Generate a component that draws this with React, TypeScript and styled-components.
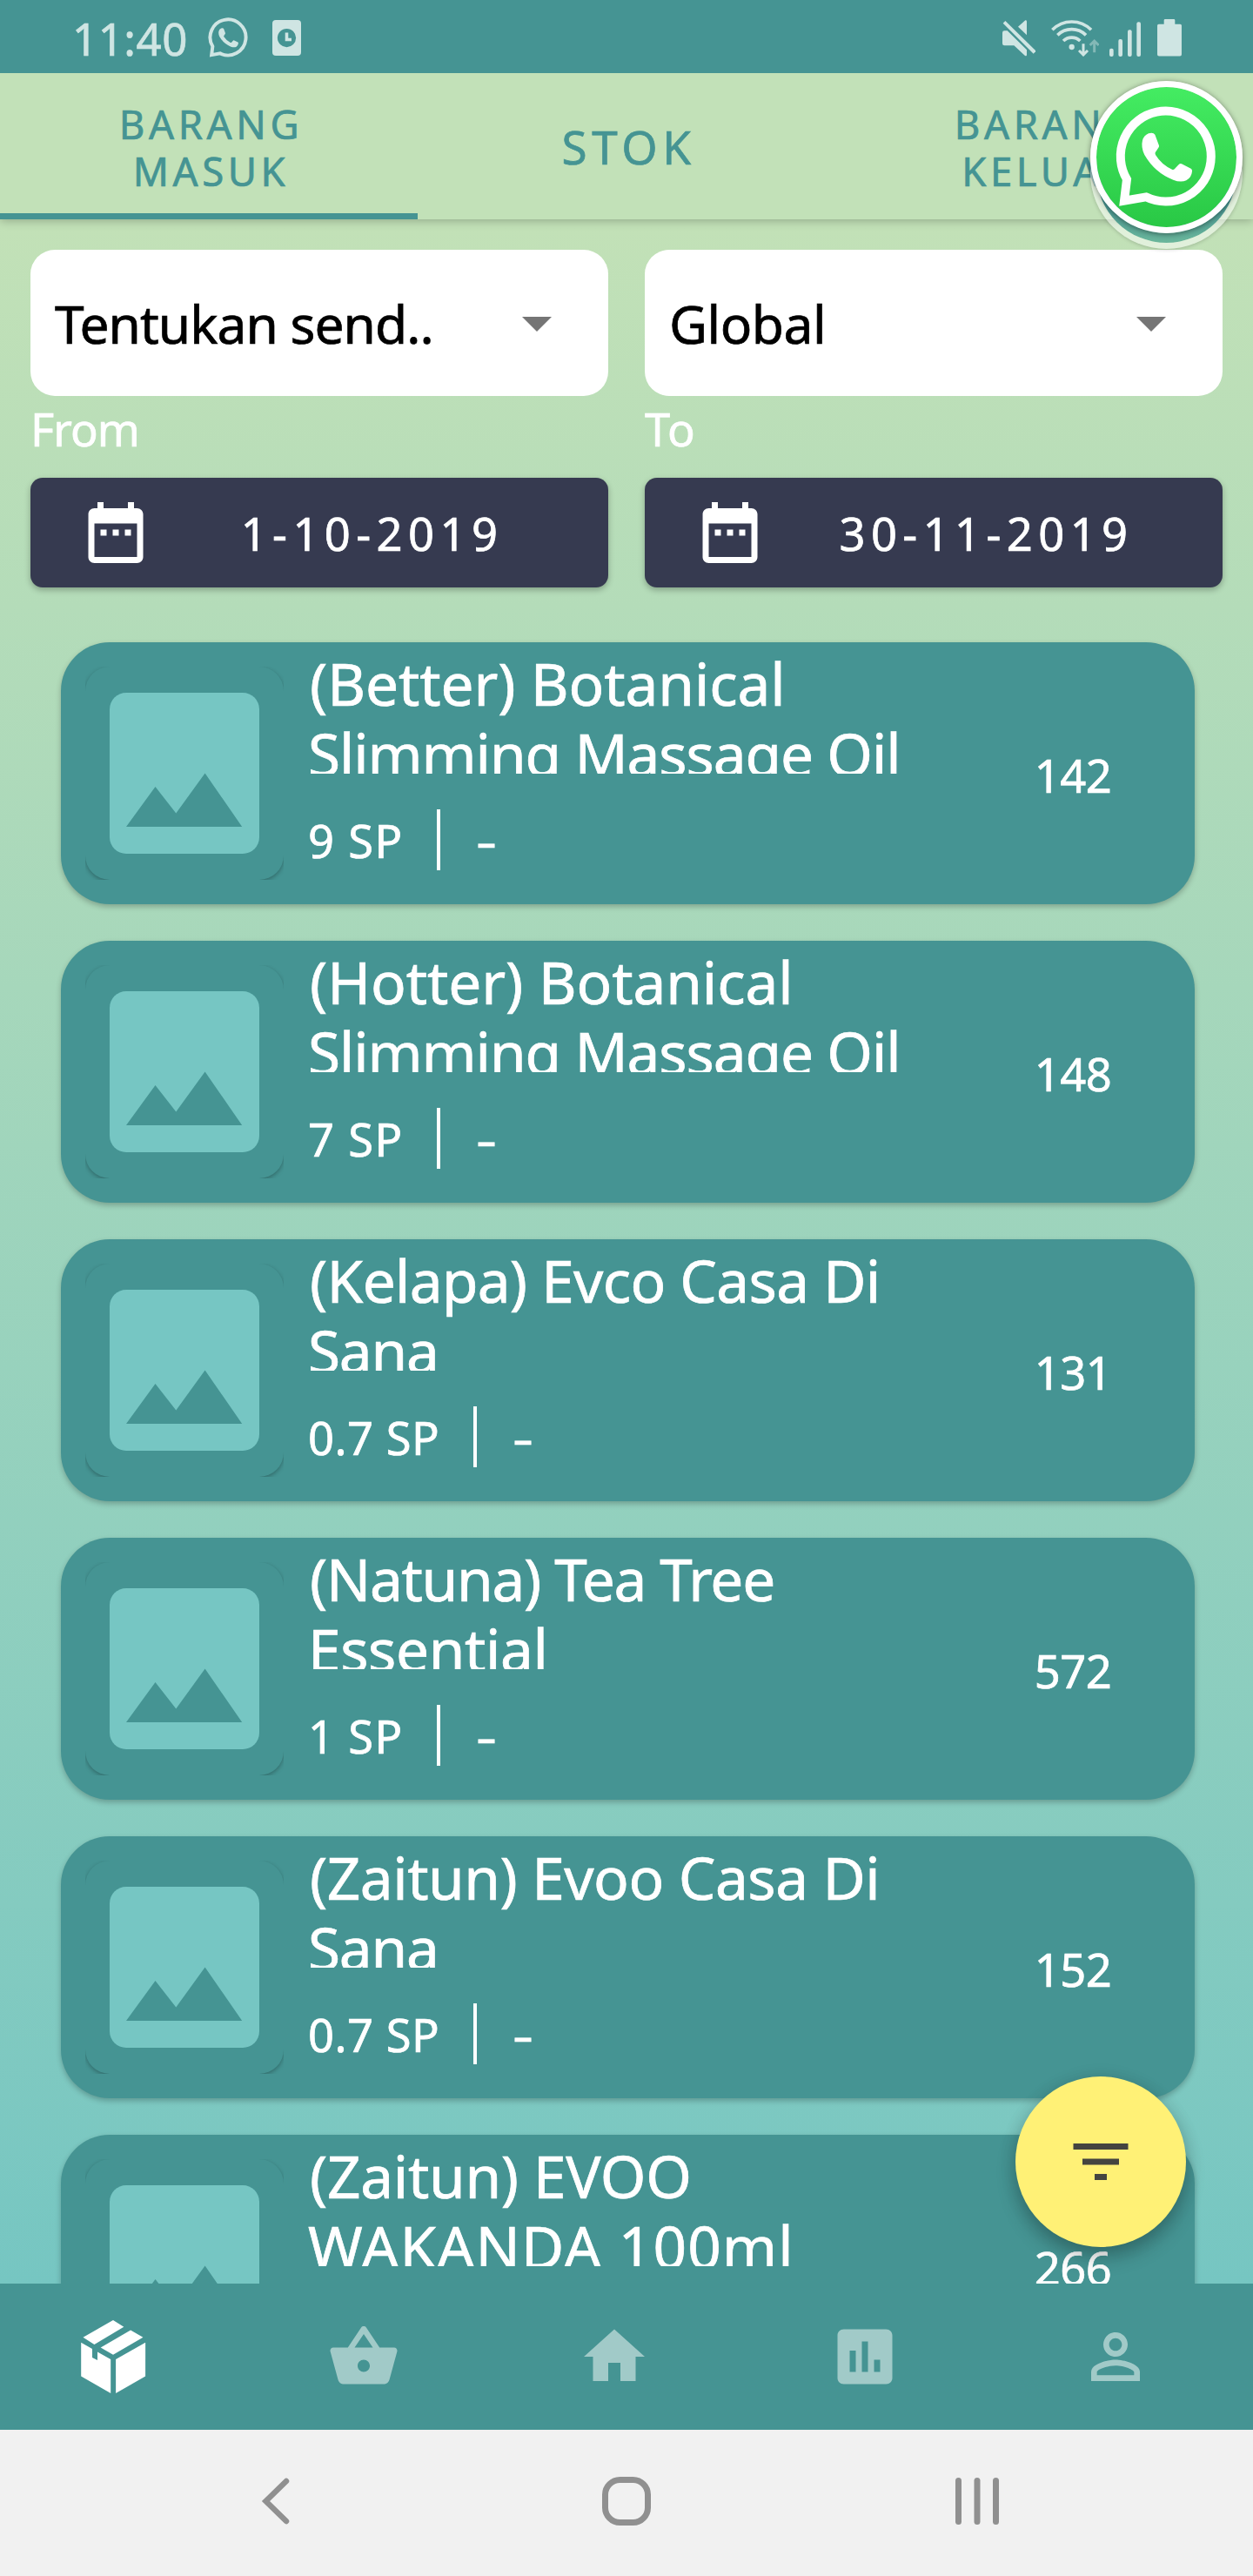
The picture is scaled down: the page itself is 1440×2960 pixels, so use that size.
import React from 'react';
import styled, { createGlobalStyle } from 'styled-components';

const TEAL = '#459493';
const STATUS_TINT = '#cfe5e3';

const GlobalStyle = createGlobalStyle`
  * { box-sizing: border-box; }
  body { margin: 0; }
`;

const Screen = styled.div`
  width: 1440px;
  height: 2960px;
  display: flex;
  flex-direction: column;
  overflow: hidden;
  font-family: 'Noto Sans', 'Open Sans', sans-serif;
  font-weight: 400;
  -webkit-text-stroke: 0.7px currentColor;
  color: #fff;
`;

/* ---------- status bar ---------- */

const StatusBar = styled.header`
  height: 84px;
  flex: none;
  display: flex;
  align-items: center;
  justify-content: space-between;
  padding: 3px 82px 0 83px;
  background: ${TEAL};
  color: ${STATUS_TINT};
`;

const StatusGroup = styled.div`
  display: flex;
  align-items: center;
`;

const Clock = styled.span`
  font-size: 51px;
  line-height: 70px;
  letter-spacing: 0.5px;
  width: 130px;
  margin-right: 27px;
`;

const StatusIcon = styled.svg<{ $ml?: number }>`
  display: block;
  flex: none;
  margin-left: ${p => p.$ml ?? 0}px;
`;

/* ---------- content ---------- */

const Content = styled.main`
  position: relative;
  flex: 1;
  min-height: 0;
  display: flex;
  flex-direction: column;
  overflow: hidden;
  background: linear-gradient(180deg, #c2e1b7 0%, #c2e1b7 7%, #76c6c2 100%);
`;

const Tabs = styled.nav`
  height: 168px;
  flex: none;
  display: grid;
  grid-template-columns: repeat(3, 1fr);
  background: #c2e1b8;
  box-shadow: 0 2px 10px rgba(0, 0, 0, 0.24);
`;

const Tab = styled.div<{ $active?: boolean; $large?: boolean }>`
  display: flex;
  align-items: center;
  justify-content: center;
  text-align: center;
  padding: ${p => (p.$large ? 9 : 8)}px 0 0 5px;
  border-bottom: 7px solid ${p => (p.$active ? TEAL : 'transparent')};
  color: ${TEAL};
  font-size: ${p => (p.$large ? 53 : 45.5)}px;
  line-height: ${p => (p.$large ? 72 : 54)}px;
  letter-spacing: ${p => (p.$large ? 5.6 : 4.6)}px;
`;

const TabLabel = styled.span<{ $width: number }>`
  width: ${p => p.$width}px;
`;

const Filters = styled.section`
  flex: none;
  display: grid;
  grid-template-columns: 664px 664px;
  column-gap: 42px;
  padding: 35px 35px 0;
`;

const Select = styled.div`
  height: 168px;
  display: flex;
  align-items: center;
  justify-content: space-between;
  padding: 2px 65px 0 28px;
  border-radius: 28px;
  background: #fff;
  color: #000;
`;

const SelectText = styled.span<{ $track: number }>`
  font-size: 60.5px;
  line-height: 82px;
  letter-spacing: ${p => p.$track}px;
  white-space: nowrap;
`;

const Caret = styled.i`
  border: 17.5px solid transparent;
  border-top-color: #757575;
  border-bottom: 0;
`;

const FieldLabel = styled.div<{ $track: number }>`
  height: 94px;
  padding-top: 2px;
  font-size: 52.5px;
  line-height: 72px;
  letter-spacing: ${p => p.$track}px;
`;

const DateButton = styled.div`
  height: 126px;
  display: flex;
  align-items: center;
  padding: 0 19px 0 56px;
  border-radius: 14px;
  background: #363a50;
  box-shadow: 0 3px 7px rgba(0, 0, 0, 0.28);
`;

const DateText = styled.span`
  flex: 1;
  padding-top: 2px;
  text-align: center;
  font-size: 52.5px;
  line-height: 72px;
  letter-spacing: 6.4px;
`;

/* ---------- list ---------- */

const List = styled.section`
  flex: 1;
  min-height: 0;
  display: flex;
  flex-direction: column;
  gap: 42px;
  padding: 63px 67px 0 70px;
  overflow: hidden;
`;

const Card = styled.article`
  height: 301px;
  flex: none;
  display: flex;
  align-items: center;
  padding-left: 28px;
  border-radius: 56px;
  background: ${TEAL};
  box-shadow: 0 3px 6px rgba(0, 0, 0, 0.24);
`;

const ThumbClip = styled.div`
  width: 228px;
  height: 245px;
  flex: none;
  overflow: hidden;
`;

const Thumb = styled.div`
  height: 245px;
  display: flex;
  align-items: center;
  justify-content: center;
  border-radius: 28px;
  background: ${TEAL};
  box-shadow: 0 2px 5px rgba(0, 0, 0, 0.28);
`;

const Info = styled.div`
  align-self: stretch;
  flex: 1;
  min-width: 0;
  padding: 7px 0 0 28px;
`;

const Title = styled.h2`
  margin: 0;
  height: 144px;
  overflow: hidden;
  font-size: 67.5px;
  font-weight: 400;
  line-height: 81px;
  white-space: nowrap;
`;

const TitleLine = styled.span<{ $track: number; $indent: number }>`
  display: block;
  padding-left: ${p => p.$indent}px;
  letter-spacing: ${p => p.$track}px;
`;

const Meta = styled.div`
  margin-top: 40px;
  display: flex;
  align-items: center;
  font-size: 52.5px;
  line-height: 70px;
`;

const Points = styled.span<{ $track: number }>`
  padding-top: 1px;
  letter-spacing: ${p => p.$track}px;
`;

const Divider = styled.i`
  width: 4px;
  height: 70px;
  margin: 0 41px 0 39px;
  background: #fff;
`;

const Dash = styled.span`
  padding-top: 2px;
  transform: scaleX(1.42);
  transform-origin: left;
`;

const Count = styled.div`
  width: 281px;
  flex: none;
  padding: 4px 0 0 1px;
  text-align: center;
  font-size: 52.5px;
  line-height: 70px;
  letter-spacing: -0.6px;
`;

/* ---------- floating elements ---------- */

const Fab = styled.div`
  position: absolute;
  right: 77px;
  bottom: 42px;
  width: 196px;
  height: 196px;
  display: grid;
  place-items: center;
  border-radius: 50%;
  background: #fff176;
  color: #444440;
  box-shadow: 0 12px 22px rgba(0, 0, 0, 0.24), 0 2px 20px rgba(0, 0, 0, 0.1);
`;

const ChatHeads = styled.div`
  position: absolute;
  top: 9px;
  right: 12px;
  width: 175px;
  height: 193px;
`;

const BackHead = styled.div`
  position: absolute;
  inset: 18px 0 0;
  border-radius: 50%;
  border: 7px solid rgba(255, 255, 255, 0.5);
  background: linear-gradient(180deg, ${TEAL} 70%, #6ab69b 100%) padding-box;
  box-shadow: 0 1px 4px rgba(0, 0, 0, 0.18);
`;

const FrontHead = styled.div`
  position: absolute;
  inset: 0 0 18px;
  display: grid;
  place-items: center;
  border-radius: 50%;
  border: 7px solid #fff;
  background: linear-gradient(180deg, #44ec62, #29c845) padding-box;
  box-shadow: 0 1px 6px rgba(0, 0, 0, 0.45);
  color: #fff;
`;

/* ---------- bottom bars ---------- */

const BottomNav = styled.nav`
  height: 168px;
  flex: none;
  display: grid;
  grid-template-columns: repeat(5, 288px);
  place-items: center;
  padding-right: 28px;
  justify-content: center;
  background: ${TEAL};
`;

const NavItem = styled.div<{ $active?: boolean }>`
  width: 84px;
  height: 84px;
  color: ${p => (p.$active ? '#fff' : '#a1cac8')};
`;

const SystemNav = styled.footer`
  height: 168px;
  flex: none;
  display: flex;
  align-items: center;
  justify-content: space-between;
  padding: 0 292px 4px 300px;
  background: #f1f1f1;
  color: #909090;
`;

const HomeKey = styled.svg`
  display: block;
  margin-left: 7px;
`;

/* ---------- icons ---------- */

const Glyph = styled.svg`
  display: block;
  flex: none;
  overflow: visible;
`;

const MaterialIcon = ({ d }: { d: string }) => (
  <Glyph width="84" height="84" viewBox="0 0 24 24" fill="currentColor">
    <path d={d} />
  </Glyph>
);

const PATHS = {
  basket:
    'M17.21 9l-4.38-6.56c-.19-.28-.51-.42-.83-.42-.32 0-.64.14-.83.43L6.79 9H2c-.55 0-1 .45-1 1 0 .09.01.18.04.27l2.54 9.27c.23.84 1 1.46 1.92 1.46h13c.92 0 1.69-.62 1.93-1.46l2.54-9.27L23 10c0-.55-.45-1-1-1h-4.79zM9 9l3-4.4L15 9H9zm3 8c-1.1 0-2-.9-2-2s.9-2 2-2 2 .9 2 2-.9 2-2 2z',
  home: 'M10 20v-6h4v6h5v-8h3L12 3 2 12h3v8z',
  chart:
    'M19 3H5c-1.1 0-2 .9-2 2v14c0 1.1.9 2 2 2h14c1.1 0 2-.9 2-2V5c0-1.1-.9-2-2-2zM9 17H7v-7h2v7zm4 0h-2V7h2v10zm4 0h-2v-4h2v4z',
  person:
    'M12 5.9c1.16 0 2.1.94 2.1 2.1s-.94 2.1-2.1 2.1S9.9 9.16 9.9 8s.94-2.1 2.1-2.1m0 9c2.97 0 6.1 1.46 6.1 2.1v1.1H5.9V17c0-.64 3.13-2.1 6.1-2.1M12 4C9.79 4 8 5.79 8 8s1.79 4 4 4 4-1.79 4-4-1.79-4-4-4zm0 9c-2.67 0-8 1.34-8 4v3h16v-3c0-2.66-5.33-4-8-4z',
  calendar:
    'M9 11H7v2h2v-2zm4 0h-2v2h2v-2zm4 0h-2v2h2v-2zm2-7h-1V2h-2v2H8V2H6v2H5c-1.11 0-1.99.9-1.99 2L3 20c0 1.1.89 2 2 2h14c1.1 0 2-.9 2-2V6c0-1.1-.9-2-2-2zm0 16H5V9h14v11z',
  filter: 'M10 18h4v-2h-4v2zM3 6v2h18V6H3zm3 7h12v-2H6v2z',
};

const WhatsAppGlyph = ({ size }: { size: number }) => (
  <Glyph width={size} height={size} viewBox="132 126 342 342">
    <path
      d="M231 433A156 156 0 1 0 165 372L156 446Z"
      fill="none"
      stroke="currentColor"
      strokeWidth="30"
      strokeMiterlimit="8"
    />
    <path
      d="M240 214Q256 209 262 218L276 256Q277 261 273 265L263 280Q262 284 264 288Q285 322 321 338Q326 340 330 336L345 320Q349 316 354 319L386 335Q391 338 390 345Q388 366 370 376Q350 384 325 374Q262 350 226 288Q213 262 219 238Q223 222 240 214Z"
      fill="currentColor"
    />
  </Glyph>
);

const BoxIcon = () => (
  <Glyph width="84" height="84" viewBox="0 0 84 84" fill="currentColor">
    <path d="M7.5 19.8 42 0l12.3 7.8L20.4 28z" />
    <path d="M27.7 31.5 62.1 11.6l14.3 8.2L42 39.8z" />
    <path d="M5.2 25.7 18 33v9.9l6 3.1v-9.6l15.2 8.6v39L5.2 64.6z" />
    <path d="M45.1 45 79.1 25.7v38.9L45.1 84z" />
  </Glyph>
);

const PictureIcon = () => (
  <Glyph width="172" height="185" viewBox="0 0 172 185">
    <rect width="172" height="185" rx="19" fill="#76c6c3" />
    <path d="M19 154 52.5 108 76.3 138.5 109.6 92.5 152.2 154z" fill={TEAL} />
  </Glyph>
);

const StatusLeft = () => (
  <StatusGroup>
    <Clock>11:40</Clock>
    <WhatsAppGlyph size={45} />
    <StatusIcon $ml={28} width="33" height="41" viewBox="0 0 33 41">
      <rect width="33" height="41" rx="4" fill={STATUS_TINT} />
      <circle cx="16.5" cy="20.6" r="10.6" fill={TEAL} />
      <path d="M16.5 14.5v8h5.5" fill="none" stroke={STATUS_TINT} strokeWidth="3.6" />
    </StatusIcon>
  </StatusGroup>
);

const StatusRight = () => (
  <StatusGroup>
    <StatusIcon width="38.7" height="42" viewBox="35 35 116 126" fill={STATUS_TINT}>
      <path d="M37 46 45 38 151 142 142 151z" />
      <path d="M89 58 114 36Q119 34 119 40V87z" />
      <path d="M42 72H52L119 138V154Q119 162 112 157L75 123H42Q35 123 35 116V79Q35 72 42 72z" />
    </StatusIcon>
    <StatusIcon $ml={17.3} width="55.7" height="42" viewBox="203 35 167 126" fill="none" stroke={STATUS_TINT}>
      <g strokeWidth="11">
        <path d="M207 69A94 94 0 0 1 341 69" />
        <path d="M225 87A70 70 0 0 1 323 87" />
        <path d="M245 107A42 42 0 0 1 303 107" />
      </g>
      <circle cx="274" cy="128" r="9.5" fill={STATUS_TINT} stroke="none" />
      <path d="M314 117V154M299 140 314 155 329 140" strokeWidth="9" />
      <path d="M352 147V108M337 122 352 107 367 122" strokeWidth="9" opacity="0.45" />
    </StatusIcon>
    <StatusIcon $ml={11.7} width="36" height="42" viewBox="405 35 108 126" fill={STATUS_TINT}>
      <rect x="405" y="133" width="14" height="28" rx="6" />
      <rect x="436" y="101" width="14" height="60" rx="6" />
      <rect x="468" y="69" width="14" height="92" rx="6" />
      <rect x="499" y="42" width="14" height="119" rx="6" />
    </StatusIcon>
    <StatusIcon $ml={19} width="28" height="42.6" viewBox="570 34 84 128" fill={STATUS_TINT}>
      <path d="M593 38Q593 34 597 34H627Q631 34 631 38V51H649Q654 51 654 56V156Q654 162 648 162H576Q570 162 570 156V56Q570 51 575 51H593z" />
    </StatusIcon>
  </StatusGroup>
);

/* ---------- data ---------- */

type Line = [text: string, track: number, indent: number];
interface Item {
  lines: [Line, Line];
  points: string;
  pointsTrack: number;
  count: string;
}

const ITEMS: Item[] = [
  { lines: [['(Better) Botanical', -0.1, 2], ['Slimming Massage Oil', -1.1, 0]], points: '9 SP', pointsTrack: 1.3, count: '142' },
  { lines: [['(Hotter) Botanical', -0.1, 2], ['Slimming Massage Oil', -1.1, 0]], points: '7 SP', pointsTrack: 1.3, count: '148' },
  { lines: [['(Kelapa) Evco Casa Di', -0.7, 2], ['Sana', -1.2, 0]], points: '0.7 SP', pointsTrack: 0.5, count: '131' },
  { lines: [['(Natuna) Tea Tree', -1.3, 2], ['Essential', -0.4, 0]], points: '1 SP', pointsTrack: 1.3, count: '572' },
  { lines: [['(Zaitun) Evoo Casa Di', -0.5, 2], ['Sana', -1.2, 0]], points: '0.7 SP', pointsTrack: 0.5, count: '152' },
  { lines: [['(Zaitun) EVOO', -0.3, 2], ['WAKANDA 100ml', 1.1, 0]], points: '0.7 SP', pointsTrack: 0.5, count: '266' },
];

export default function App() {
  return (
    <>
      <GlobalStyle />
      <Screen>
        <StatusBar>
          <StatusLeft />
          <StatusRight />
        </StatusBar>
        <Content>
          <Tabs>
            <Tab $active>
              <TabLabel $width={260}>BARANG MASUK</TabLabel>
            </Tab>
            <Tab $large>STOK</Tab>
            <Tab>
              <TabLabel $width={260}>BARANG KELUAR</TabLabel>
            </Tab>
          </Tabs>
          <Filters>
            <Select>
              <SelectText $track={-1}>Tentukan send..</SelectText>
              <Caret />
            </Select>
            <Select>
              <SelectText $track={-0.5}>Global</SelectText>
              <Caret />
            </Select>
            <FieldLabel $track={-1}>From</FieldLabel>
            <FieldLabel $track={0.5}>To</FieldLabel>
            <DateButton>
              <MaterialIcon d={PATHS.calendar} />
              <DateText>1-10-2019</DateText>
            </DateButton>
            <DateButton>
              <MaterialIcon d={PATHS.calendar} />
              <DateText>30-11-2019</DateText>
            </DateButton>
          </Filters>
          <List>
            {ITEMS.map(item => (
              <Card key={item.count}>
                <ThumbClip>
                  <Thumb>
                    <PictureIcon />
                  </Thumb>
                </ThumbClip>
                <Info>
                  <Title>
                    {item.lines.map(([text, track, indent]) => (
                      <TitleLine key={text} $track={track} $indent={indent}>
                        {text}
                      </TitleLine>
                    ))}
                  </Title>
                  <Meta>
                    <Points $track={item.pointsTrack}>{item.points}</Points>
                    <Divider />
                    <Dash>-</Dash>
                  </Meta>
                </Info>
                <Count>{item.count}</Count>
              </Card>
            ))}
          </List>
          <Fab>
            <MaterialIcon d={PATHS.filter} />
          </Fab>
          <ChatHeads>
            <BackHead />
            <FrontHead>
              <WhatsAppGlyph size={114} />
            </FrontHead>
          </ChatHeads>
        </Content>
        <BottomNav>
          <NavItem $active>
            <BoxIcon />
          </NavItem>
          <NavItem>
            <MaterialIcon d={PATHS.basket} />
          </NavItem>
          <NavItem>
            <MaterialIcon d={PATHS.home} />
          </NavItem>
          <NavItem>
            <MaterialIcon d={PATHS.chart} />
          </NavItem>
          <NavItem>
            <MaterialIcon d={PATHS.person} />
          </NavItem>
        </BottomNav>
        <SystemNav>
          <Glyph width="34" height="54" viewBox="0 0 34 54" fill="none" stroke="currentColor" strokeWidth="6.5">
            <path d="M29 4 5.5 27 29 50" strokeLinecap="round" />
          </Glyph>
          <HomeKey width="56" height="56" viewBox="0 0 56 56" fill="none" stroke="currentColor" strokeWidth="7">
            <rect x="3.5" y="3.5" width="49" height="49" rx="17" />
          </HomeKey>
          <Glyph width="50" height="54" viewBox="0 0 50 54" fill="currentColor">
            <rect x="0" width="7" height="54" rx="3.5" />
            <rect x="21.5" width="7" height="54" rx="3.5" />
            <rect x="43" width="7" height="54" rx="3.5" />
          </Glyph>
        </SystemNav>
      </Screen>
    </>
  );
}
